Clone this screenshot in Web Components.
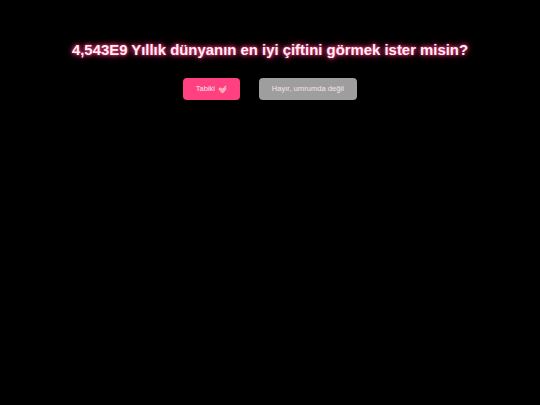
<!DOCTYPE html>
<html><head><meta charset="utf-8">
<style>html,body{margin:0;background:#000;height:100%;overflow:hidden}</style>
</head><body>
<love-page>
  <neon-title>4,543E9 Yıllık dünyanın en iyi çiftini görmek ister misin?</neon-title>
  <button-row>
  <pill-button kind="yes">Tabiki <svg slot="icon" width="9" height="9" viewBox="0 0 9 9"><path d="M4.500 8.500 1 5C0 3.800 .9 2.200 2.400 2.400 3.300 2.500 4 3 4.500 3.800 5 3 5.700 2.500 6.600 2.400 8.100 2.200 9 3.800 8 5Z" fill="#ffa9c2"/><circle cx="3.500" cy="6" r="1" fill="#f5b45e"/><path d="M5 4 7.200 1.600" stroke="#ffd0dc" stroke-width=".8" fill="none"/><path d="M6.300 1 8.300 .7 8 2.700Z" fill="#ffc4d4"/></svg></pill-button>
  <pill-button kind="no">Hayır, umrumda değil</pill-button>
  </button-row>
</love-page>
<script>
function def(name,css){customElements.define(name,class extends HTMLElement{constructor(){super();const r=this.attachShadow({mode:'open'});r.innerHTML='<style>'+css+'</style><slot></slot>';}});}
def('love-page',`:host{display:flex;flex-direction:column;align-items:center;gap:19px;padding-top:41px;width:540px;box-sizing:border-box;font-family:"Liberation Sans",Arial,sans-serif}`);
def('button-row',`:host{display:flex;justify-content:center;gap:19px}`);
def('neon-title',`:host{display:block;text-align:center;color:#fdeef4;font:bold 14.900px/18px "Liberation Sans",Arial,sans-serif;text-shadow:0 0 2px rgba(255,64,129,.8),0 0 5px #ff4081,0 0 8px rgba(255,64,129,.6)}`);
customElements.define('pill-button',class extends HTMLElement{constructor(){super();const r=this.attachShadow({mode:'open'});const k=this.getAttribute('kind');
r.innerHTML=`<style>:host{display:flex;align-items:center;justify-content:center;gap:1px;height:22px;box-sizing:border-box;padding:0 ${k==='yes'?'12.500px':'13px'};border-radius:4px;color:#f4e4ea;font:7.600px/22px "Liberation Sans",Arial,sans-serif;white-space:pre;background:${k==='yes'?'#ff4081':'#9e9e9e'}}</style><slot></slot><slot name="icon"></slot>`;}});
</script>
</body></html>
